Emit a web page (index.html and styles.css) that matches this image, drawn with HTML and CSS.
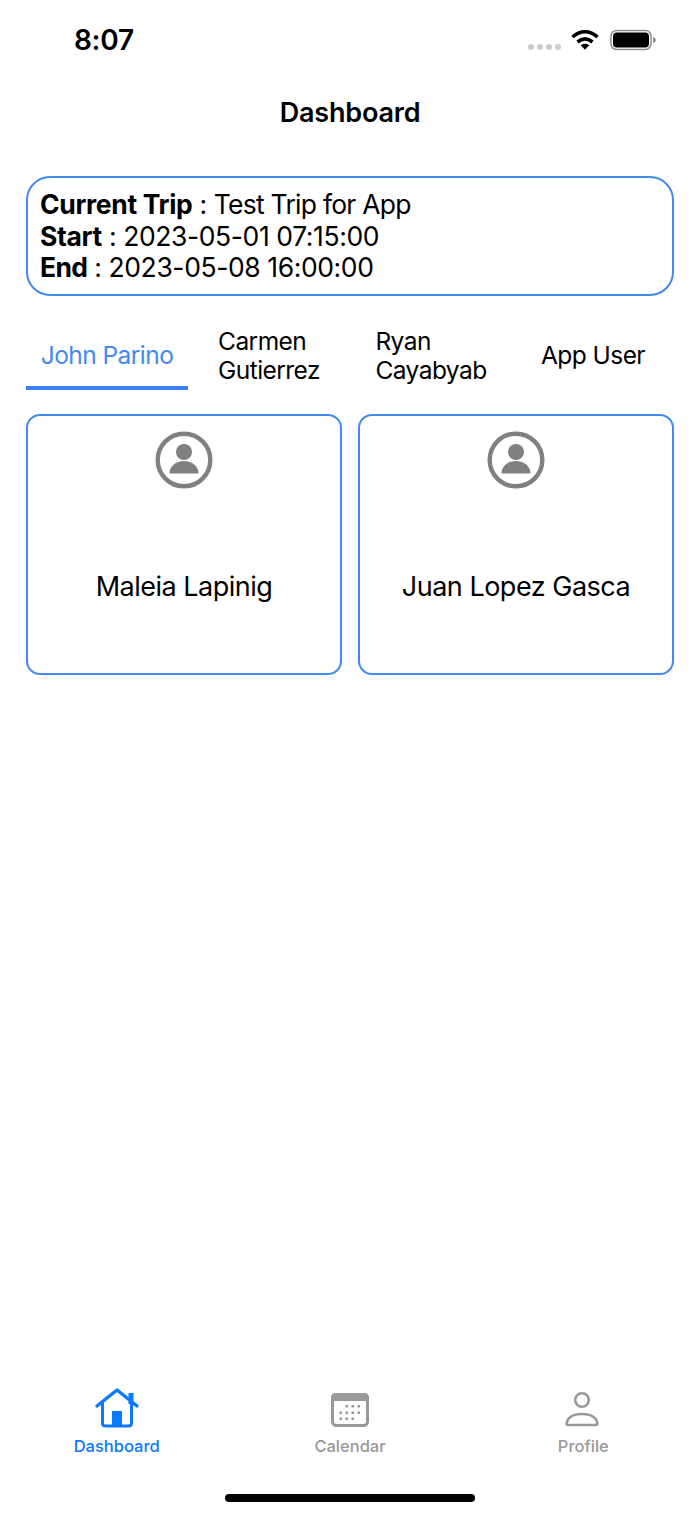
FILE: index.html
```html
<!DOCTYPE html>
<html lang="en">
<head>
<meta charset="utf-8">
<title>Dashboard</title>
<link rel="stylesheet" href="styles.css">
</head>
<body>
<div class="app">
  <div class="status">
    <span class="time">8:07</span>
    <div class="status-icons">
      <div class="dots"><i></i><i></i><i></i><i></i></div>
      <svg class="wifi" width="28" height="22" viewBox="0 0 28 22"><path d="M1.500 8C9 1 19 1 26.500 8" fill="none" stroke="#000" stroke-width="3.600"/><path d="M6.500 13C11.300 9 16.700 9 21.500 13" fill="none" stroke="#000" stroke-width="3.600"/><path d="M9.800 16.300C12.300 14.300 15.700 14.300 18.200 16.300L14 20.800Z" fill="#000"/></svg>
      <svg class="battery" width="46" height="22" viewBox="0 0 46 22"><rect x="1" y="1.500" width="40" height="19" rx="5.500" fill="none" stroke="#8e8e8e" stroke-width="1.500"/><rect x="3" y="3.500" width="36" height="15" rx="3.800" fill="#000"/><path d="M43 8c1.800 .4 2.800 1.500 2.800 3s-1 2.600-2.800 3z" fill="#8e8e8e"/></svg>
    </div>
  </div>
  <header class="title">Dashboard</header>
  <main class="content">
    <section class="trip">
      <div><b>Current Trip</b> : <span class="trip-name">Test Trip for App</span></div>
      <div><b>Start</b> : 2023-05-01 07:15:00</div>
      <div><b class="end">End</b> : 2023-05-08 16:00:00</div>
    </section>
    <nav class="tabs">
      <div class="tab active"><span>John Parino</span></div>
      <div class="tab"><span>Carmen Gutierrez</span></div>
      <div class="tab"><span>Ryan Cayabyab</span></div>
      <div class="tab"><span class="single">App User</span></div>
    </nav>
    <div class="cards">
      <article class="card">
        <svg class="avatar" width="58" height="58" viewBox="0 0 58 58"><circle cx="29" cy="29" r="26.300" fill="none" stroke="#808080" stroke-width="4.400"/><circle cx="29" cy="21" r="8" fill="#808080"/><path d="M14.500 42.500c0-7.500 6.500-12.500 14.500-12.500s14.500 5 14.500 12.500z" fill="#808080"/></svg>
        <span class="name">Maleia Lapinig</span>
      </article>
      <article class="card">
        <svg class="avatar" width="58" height="58" viewBox="0 0 58 58"><circle cx="29" cy="29" r="26.300" fill="none" stroke="#808080" stroke-width="4.400"/><circle cx="29" cy="21" r="8" fill="#808080"/><path d="M14.500 42.500c0-7.500 6.500-12.500 14.500-12.500s14.500 5 14.500 12.500z" fill="#808080"/></svg>
        <span class="name">Juan Lopez Gasca</span>
      </article>
    </div>
  </main>
  <footer class="tabbar">
    <div class="item on">
      <svg width="46" height="42" viewBox="0 0 46 42"><path d="M3 19 23 3l20 16" fill="none" stroke="#0a7aff" stroke-width="3.400" stroke-linecap="round" stroke-linejoin="round"/><path d="M8.500 15.500V36c0 2 1 3 3 3h23c2 0 3-1 3-3V15.500" fill="none" stroke="#0a7aff" stroke-width="3"/><rect x="34.500" y="6" width="5" height="11" fill="#0a7aff"/><rect x="18" y="24" width="10" height="16" fill="#0a7aff"/></svg>
      <span>Dashboard</span>
    </div>
    <div class="item">
      <svg width="46" height="42" viewBox="0 0 46 42"><rect x="5.500" y="7.500" width="35" height="31" rx="4" fill="none" stroke="#999" stroke-width="3"/><path d="M4 10.500A4.500 4.500 0 0 1 8.500 6h29A4.500 4.500 0 0 1 42 10.500V14H4z" fill="#999"/><g fill="#999"><rect x="18.500" y="18" width="2.500" height="2.500"/><rect x="24.500" y="18" width="2.500" height="2.500"/><rect x="30.500" y="18" width="2.500" height="2.500"/><rect x="12.500" y="24.500" width="2.500" height="2.500"/><rect x="18.500" y="24.500" width="2.500" height="2.500"/><rect x="24.500" y="24.500" width="2.500" height="2.500"/><rect x="30.500" y="24.500" width="2.500" height="2.500"/><rect x="12.500" y="30.500" width="2.500" height="2.500"/><rect x="18.500" y="30.500" width="2.500" height="2.500"/><rect x="24.500" y="30.500" width="2.500" height="2.500"/></g></svg>
      <span>Calendar</span>
    </div>
    <div class="item">
      <svg width="46" height="42" viewBox="0 0 46 42"><circle cx="22" cy="13" r="6.800" fill="none" stroke="#999" stroke-width="2.600"/><path d="M6.700 37c0-6.500 6.500-10 15.300-10s15.300 3.500 15.300 10c0 .6-.4 1-1 1H7.700c-.6 0-1-.4-1-1z" fill="none" stroke="#999" stroke-width="2.600"/></svg>
      <span>Profile</span>
    </div>
  </footer>
  <div class="home-wrap"><div class="home"></div></div>
</div>
</body>
</html>
```

FILE: styles.css
```css
* { box-sizing: border-box; }
html, body { margin: 0; padding: 0; background: #fff; }
body { font-family: Inter, "Liberation Sans", sans-serif; color: #000; }
.app { width: 700px; height: 1514px; display: flex; flex-direction: column; overflow: hidden; }
.status { height: 80px; padding: 0 44px 0 74px; display: flex; justify-content: space-between; align-items: center; }
.time { font-size: 28px; font-weight: 600; letter-spacing: -0.3px; }
.status-icons { display: flex; align-items: center; }
.dots { display: flex; gap: 3px; margin-right: 10px; margin-top: 14px; }
.dots i { width: 6px; height: 6px; border-radius: 50%; background: #ccc; }
.wifi { margin-right: 11px; }
.title { height: 66px; text-align: center; font-size: 27px; font-weight: 600; line-height: 66px; letter-spacing: -0.2px; }
.content { flex: 1; padding: 30px 26px 0; }
.trip { height: 120px; border: 2px solid #4489f0; border-radius: 24px; padding: 11px 12px; font-size: 26.500px; line-height: 31.500px; letter-spacing: -0.4px; }
.trip b { font-weight: 700; letter-spacing: -0.35px; }
.trip b.end { letter-spacing: -0.7px; }
.trip-name { letter-spacing: -0.75px; }
.tabs { display: grid; grid-template-columns: repeat(4, minmax(0, 1fr)); height: 70px; margin-top: 24px; }
.tab { display: flex; align-items: center; justify-content: center; text-align: left; font-size: 24.500px; line-height: 29px; letter-spacing: -0.55px; padding: 1px 40px 0; }
.tab span { display: block; }
.tab .single { white-space: nowrap; }
.tab.active { color: #4489f0; border-bottom: 4px solid #3b82f0; padding: 4px 0 0; }
.cards { display: grid; grid-template-columns: 1fr 1fr; gap: 16px; margin-top: 24px; }
.card { height: 261px; border: 2px solid #4489f0; border-radius: 14px; display: flex; flex-direction: column; align-items: center; padding-top: 15px; }
.name { margin-top: 81px; font-size: 27px; line-height: 33px; letter-spacing: -0.5px; }
.tabbar { height: 88px; display: grid; grid-template-columns: repeat(3, 1fr); }
.item { display: flex; flex-direction: column; align-items: center; color: #999; font-size: 16.500px; font-weight: 500; line-height: 20px; }
.item.on { color: #0a7aff; }
.item svg { display: block; margin-bottom: 7px; }
.home-wrap { height: 39px; padding-top: 19px; display: flex; justify-content: center; }
.home { width: 250px; height: 8px; border-radius: 4px; background: #000; }
```
